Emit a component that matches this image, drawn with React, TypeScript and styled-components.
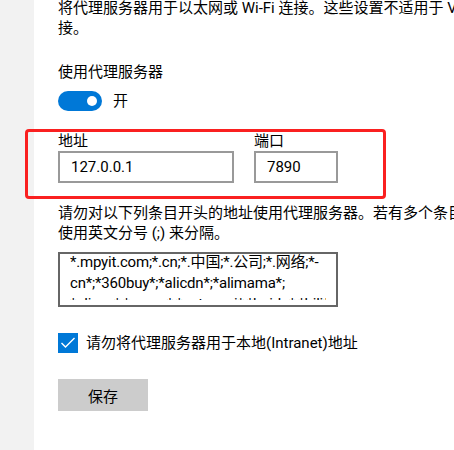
import React from "react";
import styled, { createGlobalStyle } from "styled-components";

const GlobalStyle = createGlobalStyle`
  html, body {
    margin: 0;
    padding: 0;
    background: #ffffff;
    overflow: hidden;
  }
  body {
    font-family: Roboto, "Noto Sans CJK SC", sans-serif;
    font-size: 15px;
    color: #000000;
  }
`;

const Page = styled.div`
  display: flex;
  width: 454px;
  height: 450px;
  overflow: hidden;
`;

const Sidebar = styled.div`
  width: 34px;
  flex-shrink: 0;
  background: #f2f2f2;
`;

const Main = styled.main`
  flex: 1;
  display: flex;
  flex-direction: column;
  align-items: flex-start;
  padding-left: 24px;
  margin-top: -2px;
  white-space: nowrap;
`;

const Para = styled.p<{ top?: number }>`
  margin: ${(p) => p.top ?? 0}px 0 0;
  line-height: 20px;
`;

const Heading = styled.div`
  margin-top: 24px;
  line-height: 20px;
`;

const ToggleRow = styled.label`
  display: flex;
  align-items: center;
  gap: 11px;
  margin-top: 9px;
  line-height: 20px;
`;

const Track = styled.span<{ on: boolean }>`
  position: relative;
  width: 44px;
  height: 20px;
  border-radius: 10px;
  background: ${(p) => (p.on ? "#0078d7" : "#ffffff")};
  border: ${(p) => (p.on ? "none" : "2px solid #333")};
  box-sizing: border-box;
`;

const Knob = styled.span<{ on: boolean }>`
  position: absolute;
  top: 5px;
  left: ${(p) => (p.on ? "29px" : "5px")};
  width: 10px;
  height: 10px;
  border-radius: 50%;
  background: ${(p) => (p.on ? "#ffffff" : "#333")};
`;

const Highlight = styled.div`
  margin: 18px 0 0 -33px;
  width: 361px;
  box-sizing: border-box;
  border: 3px solid #fa2020;
  border-radius: 4px;
  padding: 0 0 13px 30px;
  display: flex;
  gap: 20px;
`;

const Field = styled.div`
  display: flex;
  flex-direction: column;
`;

const FieldLabel = styled.span`
  line-height: 19px;
`;

const Input = styled.div<{ w: number }>`
  width: ${(p) => p.w}px;
  height: 32px;
  box-sizing: border-box;
  border: 2px solid #999999;
  padding: 0 11px;
  line-height: 28px;
`;

const TextBox = styled.div`
  margin-top: 9px;
  width: 280px;
  height: 55px;
  box-sizing: border-box;
  border: 2px solid #666666;
  padding: 0 10px 5px;
`;

const TextClip = styled.div`
  height: 100%;
  overflow: hidden;
`;

const TextLines = styled.div`
  margin-top: -2px;
  line-height: 21px;
  font-size: 15px;
  letter-spacing: -0.2px;
`;

const CheckRow = styled.label`
  display: flex;
  align-items: center;
  gap: 8px;
  margin-top: 26px;
  line-height: 20px;
`;

const CheckBox = styled.span`
  width: 20px;
  height: 20px;
  background: #0078d7;
  display: flex;
  align-items: center;
  justify-content: center;
`;

const SaveButton = styled.button`
  margin-top: 26px;
  width: 90px;
  height: 32px;
  border: none;
  background: #cccccc;
  font: inherit;
  color: #000;
  padding: 0;
`;

export default function App() {
  const [on] = React.useState(true);

  return (
    <>
      <GlobalStyle />
      <Page>
        <Sidebar />
        <Main>
          <Para>
            将代理服务器用于以太网或 Wi-Fi 连接。这些设置不适用于 VPN 连
            <br />
            接。
          </Para>
          <Heading>使用代理服务器</Heading>
          <ToggleRow>
            <Track on={on}>
              <Knob on={on} />
            </Track>
            <span>{on ? "开" : "关"}</span>
          </ToggleRow>
          <Highlight>
            <Field>
              <FieldLabel>地址</FieldLabel>
              <Input w={176}>127.0.0.1</Input>
            </Field>
            <Field>
              <FieldLabel>端口</FieldLabel>
              <Input w={84}>7890</Input>
            </Field>
          </Highlight>
          <Para top={4}>
            请勿对以下列条目开头的地址使用代理服务器。若有多个条目，请
            <br />
            使用英文分号 (;) 来分隔。
          </Para>
          <TextBox>
            <TextClip>
              <TextLines>
                *.mpyit.com;*.cn;*.中国;*.公司;*.网络;*-
                <br />
                cn*;*360buy*;*alicdn*;*alimama*;
                <br />
                *alipay*;*amap*;*autonavi*;*baidu*;*bili*
              </TextLines>
            </TextClip>
          </TextBox>
          <CheckRow>
            <CheckBox>
              <svg width="20" height="20" viewBox="0 0 20 20">
                <polyline
                  points="3.5,10 7.5,14 16.5,5"
                  fill="none"
                  stroke="#ffffff"
                  strokeWidth="1.4"
                />
              </svg>
            </CheckBox>
            <span>请勿将代理服务器用于本地(Intranet)地址</span>
          </CheckRow>
          <SaveButton>保存</SaveButton>
        </Main>
      </Page>
    </>
  );
}
